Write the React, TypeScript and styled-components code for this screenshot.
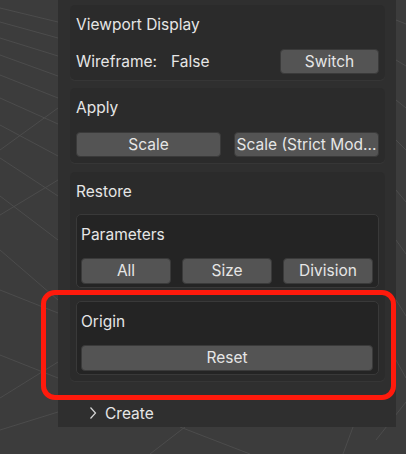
import React from "react";
import styled, { createGlobalStyle } from "styled-components";

const GlobalStyle = createGlobalStyle`
  html, body { margin: 0; padding: 0; background: #3c3c3c; }
  body { font-family: Inter, "Noto Sans", sans-serif; -webkit-font-smoothing: antialiased; }
`;

const Viewport = styled.div`
  position: relative;
  width: 406px;
  height: 454px;
  overflow: hidden;
  background: #3c3c3c;
`;

const Grid = styled.svg`
  position: absolute;
  inset: 0;
  width: 406px;
  height: 454px;
`;

const Sidebar = styled.div`
  position: relative;
  margin-left: 58px;
  width: 338px;
  height: 427px;
  box-sizing: border-box;
  padding: 5px 11px 0 12px;
  background: #2f2f2f;
  display: flex;
  flex-direction: column;
  gap: 8px;
`;

const Panel = styled.div<{ $before?: number }>`
  background: #2b2b2b;
  border-radius: 5px;
  padding: 6px;
  margin-top: ${(p) => p.$before ?? 0}px;
  display: flex;
  flex-direction: column;
  box-shadow: 0 1px 0 #363636;
`;

const Title = styled.div<{ $after: number }>`
  box-sizing: border-box;
  height: 24px;
  padding-top: 3px;
  line-height: 21px;
  font-size: 15.5px;
  color: #e6e6e6;
  margin-bottom: ${(p) => p.$after}px;
  white-space: nowrap;
`;

const Row = styled.div<{ $gap?: number }>`
  display: flex;
  align-items: center;
  height: 25px;
  gap: ${(p) => p.$gap ?? 0}px;
`;

const Label = styled.span<{ $w?: number }>`
  font-size: 15.5px;
  color: #e6e6e6;
  width: ${(p) => (p.$w ? `${p.$w}px` : "auto")};
  flex: ${(p) => (p.$w ? "none" : "1")};
  white-space: nowrap;
`;

const Button = styled.div<{ $w?: number; $h?: number }>`
  box-sizing: border-box;
  height: ${(p) => p.$h ?? 25}px;
  ${(p) => (p.$w ? `width: ${p.$w}px; flex: none;` : "flex: 1;")}
  background: #545454;
  border: 1px solid #3a3a3a;
  border-radius: 4px;
  display: flex;
  align-items: center;
  justify-content: center;
  font-size: 15.5px;
  color: #e6e6e6;
  white-space: nowrap;
  overflow: hidden;
`;

const SubPanel = styled.div`
  background: #242424;
  border: 1px solid #393939;
  border-radius: 5px;
  padding: 6px 5px 4px 4px;
  display: flex;
  flex-direction: column;
`;

const SubStack = styled.div`
  display: flex;
  flex-direction: column;
  gap: 13px;
`;

const CreateRow = styled.div`
  display: flex;
  align-items: center;
  height: 24px;
  margin-top: 12px;
  padding-left: 19px;
  gap: 8px;
  font-size: 15.5px;
  color: #e6e6e6;
`;

const Highlight = styled.div`
  position: absolute;
  left: 41px;
  top: 290px;
  width: 355px;
  height: 110px;
  box-sizing: border-box;
  border: 5px solid #ff1a0c;
  border-radius: 14px;
  pointer-events: none;
`;

const gridLines: [number, number, number, number][] = [
  [0, 8, 58, 22],
  [0, 22, 58, 38],
  [0, 38, 58, 56],
  [0, 55, 58, 76],
  [0, 75, 58, 98],
  [0, 98, 58, 124],
  [0, 125, 58, 156],
  [0, 158, 58, 196],
  [0, 150, 58, 108],
  [0, 215, 58, 180],
  [0, 196, 58, 240],
  [0, 250, 58, 300],
  [0, 290, 58, 313],
  [0, 355, 58, 378],
  [0, 398, 58, 362],
  [0, 430, 58, 412],
  [150, 454, 185, 427],
  [180, 427, 250, 454],
  [343, 454, 353, 427],
  [376, 440, 406, 402],
  [396, 20, 406, 24],
  [396, 60, 406, 66],
  [396, 100, 406, 108],
  [396, 140, 406, 150],
  [396, 190, 406, 202],
  [396, 240, 406, 254],
  [396, 300, 406, 316],
  [396, 360, 406, 378],
];

export default function App() {
  return (
    <Viewport>
      <GlobalStyle />
      <Grid viewBox="0 0 406 454">
        {gridLines.map(([x1, y1, x2, y2], i) => (
          <line key={i} x1={x1} y1={y1} x2={x2} y2={y2} stroke="#4c4c4c" strokeWidth={1} />
        ))}
      </Grid>
      <Sidebar>
        <Panel>
          <Title $after={14}>Viewport Display</Title>
          <Row>
            <Label $w={95}>Wireframe:</Label>
            <Label>False</Label>
            <Button $w={99}>Switch</Button>
          </Row>
        </Panel>
        <Panel>
          <Title $after={14}>Apply</Title>
          <Row $gap={13}>
            <Button>Scale</Button>
            <Button>Scale (Strict Mod...</Button>
          </Row>
        </Panel>
        <Panel $before={1}>
          <Title $after={12}>Restore</Title>
          <SubStack>
            <SubPanel>
              <Title $after={13}>Parameters</Title>
              <Row $gap={11}>
                <Button $h={26}>All</Button>
                <Button $h={26}>Size</Button>
                <Button $h={26}>Division</Button>
              </Row>
            </SubPanel>
            <SubPanel>
              <Title $after={13}>Origin</Title>
              <Row>
                <Button $h={26}>Reset</Button>
              </Row>
            </SubPanel>
          </SubStack>
        </Panel>
        <CreateRow>
          <svg width="8" height="14" viewBox="0 0 8 14">
            <polyline points="1.5,1.5 6.5,7 1.5,12.5" fill="none" stroke="#d8d8d8" strokeWidth="1.2" />
          </svg>
          <span>Create</span>
        </CreateRow>
      </Sidebar>
      <Highlight />
    </Viewport>
  );
}
